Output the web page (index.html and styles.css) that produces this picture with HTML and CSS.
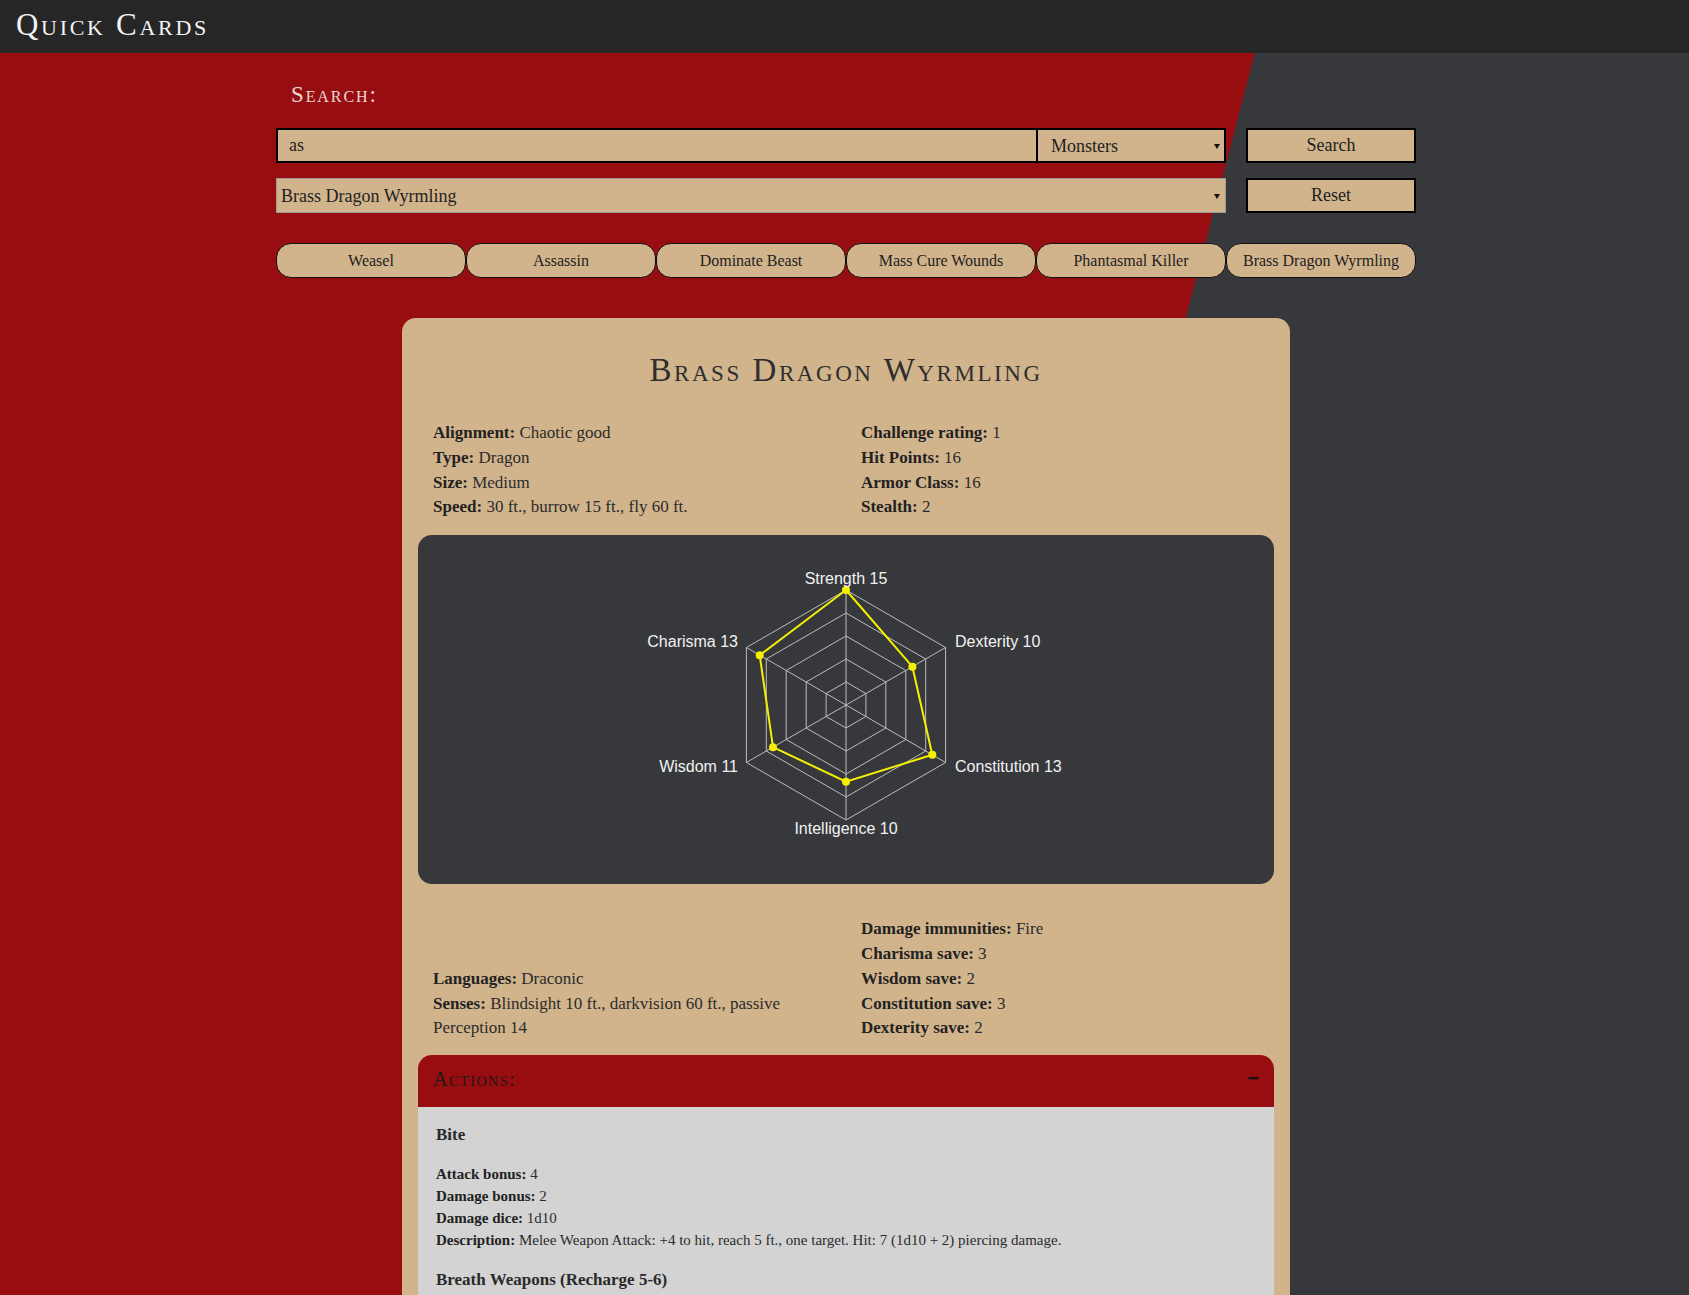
FILE: index.html
```html
<!DOCTYPE html>
<html lang="en">
<head>
<meta charset="utf-8">
<title>Quick Cards</title>
<link rel="stylesheet" href="styles.css">
</head>
<body>
<header class="topbar">
  <h1 class="brand">Quick Cards</h1>
</header>
<main class="container">
  <section class="search">
    <h2 class="search-label">Search:</h2>
    <div class="search-row">
      <div class="search-fields">
        <input class="search-input" type="text" value="as">
        <div class="select-wrap type-wrap">
          <select class="type-select"><option>Monsters</option><option>Spells</option></select>
        </div>
      </div>
      <div class="search-action"><button class="btn">Search</button></div>
    </div>
    <div class="search-row">
      <div class="search-fields">
        <div class="select-wrap result-wrap">
          <select class="result-select"><option>Brass Dragon Wyrmling</option></select>
        </div>
      </div>
      <div class="search-action"><button class="btn">Reset</button></div>
    </div>
  </section>

  <nav class="history">
    <button class="pill">Weasel</button>
    <button class="pill">Assassin</button>
    <button class="pill">Dominate Beast</button>
    <button class="pill">Mass Cure Wounds</button>
    <button class="pill">Phantasmal Killer</button>
    <button class="pill">Brass Dragon Wyrmling</button>
  </nav>

  <article class="card">
    <h2 class="card-title">Brass Dragon Wyrmling</h2>
    <div class="stats stats-top">
      <div class="stats-col">
        <p><b>Alignment:</b> Chaotic good</p>
        <p><b>Type:</b> Dragon</p>
        <p><b>Size:</b> Medium</p>
        <p><b>Speed:</b> 30 ft., burrow 15 ft., fly 60 ft.</p>
      </div>
      <div class="stats-col">
        <p><b>Challenge rating:</b> 1</p>
        <p><b>Hit Points:</b> 16</p>
        <p><b>Armor Class:</b> 16</p>
        <p><b>Stealth:</b> 2</p>
      </div>
    </div>

    <div class="chart">
      <svg class="radar" width="856" height="349" viewBox="0 0 856 349">
        <g class="grid">
          <polygon points="428,55 527.6,112.5 527.6,227.5 428,285 328.4,227.5 328.4,112.5"/>
          <polygon points="428,78 507.7,124 507.7,216 428,262 348.3,216 348.3,124"/>
          <polygon points="428,101 487.8,135.5 487.8,204.5 428,239 368.2,204.5 368.2,135.5"/>
          <polygon points="428,124 467.8,147 467.8,193 428,216 388.2,193 388.2,147"/>
          <polygon points="428,147 447.9,158.5 447.9,181.5 428,193 408.1,181.5 408.1,158.5"/>
          <line x1="428" y1="170" x2="428" y2="55"/>
          <line x1="428" y1="170" x2="527.6" y2="112.5"/>
          <line x1="428" y1="170" x2="527.6" y2="227.5"/>
          <line x1="428" y1="170" x2="428" y2="285"/>
          <line x1="428" y1="170" x2="328.4" y2="227.5"/>
          <line x1="428" y1="170" x2="328.4" y2="112.5"/>
        </g>
        <polygon class="data" points="428,55 494.4,131.7 514.3,219.8 428,246.7 355,212.2 341.7,120.2"/>
        <g class="dots">
          <circle cx="428" cy="55" r="4"/>
          <circle cx="494.4" cy="131.7" r="4"/>
          <circle cx="514.3" cy="219.8" r="4"/>
          <circle cx="428" cy="246.7" r="4"/>
          <circle cx="355" cy="212.2" r="4"/>
          <circle cx="341.7" cy="120.2" r="4"/>
        </g>
        <g class="labels">
          <text x="428" y="48.5" text-anchor="middle">Strength 15</text>
          <text x="537" y="112" text-anchor="start">Dexterity 10</text>
          <text x="537" y="237.3" text-anchor="start">Constitution 13</text>
          <text x="428" y="299.3" text-anchor="middle">Intelligence 10</text>
          <text x="320" y="237.3" text-anchor="end">Wisdom 11</text>
          <text x="320" y="112" text-anchor="end">Charisma 13</text>
        </g>
      </svg>
    </div>

    <div class="stats stats-bottom">
      <div class="stats-col">
        <p><b>Languages:</b> Draconic</p>
        <p><b>Senses:</b> Blindsight 10 ft., darkvision 60 ft., passive Perception 14</p>
      </div>
      <div class="stats-col">
        <p><b>Damage immunities:</b> Fire</p>
        <p><b>Charisma save:</b> 3</p>
        <p><b>Wisdom save:</b> 2</p>
        <p><b>Constitution save:</b> 3</p>
        <p><b>Dexterity save:</b> 2</p>
      </div>
    </div>

    <section class="actions">
      <div class="actions-head">
        <h3 class="actions-title">Actions:</h3>
        <span class="toggle">&minus;</span>
      </div>
      <div class="actions-body">
        <div class="action">
          <h4 class="action-name">Bite</h4>
          <div class="action-details">
            <p><b>Attack bonus:</b> 4</p>
            <p><b>Damage bonus:</b> 2</p>
            <p><b>Damage dice:</b> 1d10</p>
            <p><b>Description:</b> Melee Weapon Attack: +4 to hit, reach 5 ft., one target. Hit: 7 (1d10 + 2) piercing damage.</p>
          </div>
        </div>
        <div class="action">
          <h4 class="action-name">Breath Weapons (Recharge 5-6)</h4>
          <div class="action-details">
            <p><b>Description:</b> The dragon uses one of the following breath weapons. Fire Breath. The dragon exhales fire in an 20-foot line that is 5 feet wide.</p>
          </div>
        </div>
      </div>
    </section>
  </article>
</main>
</body>
</html>
```

FILE: styles.css
```css
html {
  overflow: hidden;
}

body {
  margin: 0;
  min-height: 100vh;
  font-family: "Liberation Serif", "Times New Roman", serif;
  color: #2b2b2b;
  background-color: #37383c;
  background-image: linear-gradient(104.6deg, #970d10 1227.7px, #37383c 1227.7px);
  background-size: 100% 100vh;
  background-repeat: no-repeat;
}

.topbar {
  height: 53px;
  background: #262626;
}

.brand {
  margin: 0;
  padding: 0 0 4px 16px;
  font-family: "Liberation Serif", serif;
  font-weight: normal;
  font-size: 31px;
  line-height: 49px;
  font-variant: small-caps;
  letter-spacing: 2.7px;
  color: #f4f4f4;
}

.container {
  width: 1140px;
  margin-left: calc(50% - 568.5px);
  padding-bottom: 40px;
}

.search-label {
  margin: 27px 0 18px 15px;
  font-weight: normal;
  font-size: 23px;
  line-height: 30px;
  font-variant: small-caps;
  letter-spacing: 1.9px;
  color: #ead8d8;
}

.search-row {
  display: grid;
  grid-template-columns: 950px 190px;
  height: 35px;
}

.search-row + .search-row {
  margin-top: 15px;
}

.search-fields {
  display: flex;
}

.search-input {
  flex: 0 0 760px;
  min-width: 0;
  box-sizing: border-box;
  height: 35px;
  margin: 0;
  padding: 0 11px;
  border: 2px solid #000;
  border-right: 0;
  background: #d2b48c;
  font-family: "Liberation Serif", serif;
  font-size: 18px;
  color: #1e1e1e;
  outline: none;
}

.select-wrap {
  position: relative;
  display: flex;
  min-width: 0;
}

.select-wrap::after {
  content: "";
  position: absolute;
  right: 6px;
  top: 50%;
  margin-top: -2px;
  border-left: 3px solid transparent;
  border-right: 3px solid transparent;
  border-top: 5px solid #111;
  pointer-events: none;
}

.type-wrap {
  flex: 0 0 190px;
}

.result-wrap {
  flex: 1;
}

.type-select,
.result-select {
  -webkit-appearance: none;
  appearance: none;
  flex: 1;
  min-width: 0;
  box-sizing: border-box;
  height: 35px;
  margin: 0;
  border-radius: 0;
  background-color: #d2b48c;
  font-family: "Liberation Serif", serif;
  font-size: 18px;
  color: #1e1e1e;
  outline: none;
}

.type-select {
  padding: 0 16px 0 13px;
  border: 2px solid #000;
}

.result-select {
  padding: 0 16px 0 4px;
  border: 1px solid #9b9b9b;
}

.search-action {
  padding-left: 20px;
}

.btn {
  width: 100%;
  height: 35px;
  box-sizing: border-box;
  margin: 0;
  border: 2px solid #000;
  border-radius: 0;
  background: #d2b48c;
  font-family: "Liberation Serif", serif;
  font-size: 18px;
  color: #1e1e1e;
}

.history {
  display: grid;
  grid-template-columns: repeat(6, 1fr);
  margin-top: 30px;
}

.pill {
  height: 35px;
  margin: 0;
  padding: 0;
  border: 1px solid #111;
  border-radius: 15px;
  background: #d2b48c;
  font-family: "Liberation Serif", serif;
  font-size: 16px;
  color: #1e1e1e;
}

.card {
  width: 888px;
  box-sizing: border-box;
  margin: 40px auto 0;
  padding: 0 16px 16px;
  background: #d2b48c;
  border-radius: 14px;
}

.card-title {
  margin: 0;
  padding-top: 32px;
  text-align: center;
  font-weight: normal;
  font-size: 33px;
  line-height: 40px;
  font-variant: small-caps;
  letter-spacing: 2.55px;
  color: #2e2e2e;
}

.stats {
  display: grid;
  grid-template-columns: 1fr 1fr;
  font-size: 17px;
  line-height: 24.8px;
}

.stats p {
  margin: 0;
}

.stats b {
  color: #222;
}

.stats-col {
  padding: 0 15px;
}

.stats-top {
  margin-top: 31px;
}

.stats-bottom {
  margin-top: 33px;
  align-items: end;
}

.chart {
  margin-top: 15px;
  height: 349px;
  background: #37383c;
  border-radius: 14px;
}

.radar {
  display: block;
}

.grid polygon,
.grid line {
  fill: none;
  stroke: #bdbdbd;
  stroke-width: 1;
}

.data {
  fill: none;
  stroke: #f5f000;
  stroke-width: 2;
}

.dots circle {
  fill: #f5f000;
}

.labels text {
  font-family: "Liberation Sans", Arial, sans-serif;
  font-size: 16px;
  fill: #f2f2f2;
}

.actions {
  margin-top: 14px;
  border-radius: 14px 14px 0 0;
  overflow: hidden;
}

.actions-head {
  display: flex;
  justify-content: space-between;
  height: 52px;
  padding: 0 15px;
  background: #970d10;
}

.actions-title {
  margin: 0;
  font-weight: normal;
  font-size: 20px;
  line-height: 48px;
  font-variant: small-caps;
  letter-spacing: 1.6px;
  color: #1a1a1a;
}

.toggle {
  font-family: "Liberation Sans", sans-serif;
  font-size: 20px;
  font-weight: bold;
  line-height: 46px;
  color: #111;
}

.actions-body {
  background: #d3d3d3;
  padding: 16px 18px 20px;
}

.action-name {
  margin: 0;
  font-size: 17px;
  line-height: 24.8px;
  font-weight: bold;
  color: #2a2a2a;
}

.action + .action {
  margin-top: 17px;
}

.action-details {
  margin-top: 15.4px;
  font-size: 15px;
  line-height: 22px;
}

.action-details p {
  margin: 0;
}

.action-details b {
  color: #222;
}
```
